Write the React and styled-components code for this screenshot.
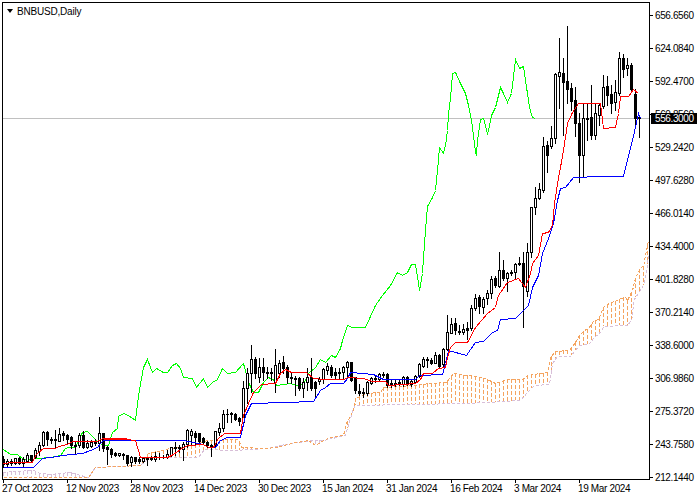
import React from 'react';
import styled, { createGlobalStyle } from 'styled-components';

const GlobalStyle = createGlobalStyle`
    html, body {
        margin: 0;
        padding: 0;
        background: #ffffff;
    }
`;

const Page = styled.div`
    width: 700px;
    height: 500px;
    box-sizing: border-box;
    padding: 2px 0 0 2px;
    display: grid;
    grid-template-columns: 648px 50px;
    grid-template-rows: 478px 20px;
    background: #ffffff;
    color: #000000;
    font-family: "Liberation Sans", Arial, sans-serif;
    font-size: 10px;
    overflow: hidden;
`;
const ChartPanel = styled.div`
    grid-column: 1;
    grid-row: 1;
    position: relative;
    border: 1px solid #000000;
    overflow: hidden;
`;
const ChartSvg = styled.svg`
    display: block;
`;
const Title = styled.div`
    position: absolute;
    left: 4px;
    top: 1px;
    height: 14px;
    display: flex;
    align-items: center;
    gap: 4px;
    letter-spacing: -0.2px;
`;
const Arrow = styled.span`
    width: 0;
    height: 0;
    border-left: 3.5px solid transparent;
    border-right: 3.5px solid transparent;
    border-top: 4px solid #000000;
`;
const PriceAxis = styled.div`
    grid-column: 2;
    grid-row: 1 / span 2;
    position: relative;
    box-sizing: border-box;
    padding: 6px 0 15px;
    display: flex;
    flex-direction: column;
    justify-content: space-between;
    letter-spacing: -0.38px;
`;
const PriceRow = styled.div`
    height: 14px;
    display: flex;
    align-items: center;
    gap: 2px;
    &::before {
        content: "";
        width: 3px;
        height: 1px;
        background: #000000;
    }
`;
const CurrentPrice = styled.div`
    position: absolute;
    left: 1px;
    top: 111px;
    width: 42px;
    height: 11px;
    padding-left: 4px;
    line-height: 11px;
    background: #000000;
    color: #ffffff;
`;
const TimeAxis = styled.div`
    grid-column: 1;
    grid-row: 2;
    display: flex;
    letter-spacing: -0.35px;
`;
const TimeLabel = styled.div`
    width: 64px;
    white-space: nowrap;
    line-height: 12px;
    &::before {
        content: "";
        display: block;
        width: 1px;
        height: 3px;
        margin-left: 1px;
        background: #000000;
    }
`;

// [high, body top, body bottom, low, filled], screen pixels, one bar each 4px from x=3
const BARS = [
    [456,459,464,467,1],[459,461,464,466,0],[459,461,463,465,0],[458,458,463,464,0],[457,458,463,464,1],
    [457,459,463,467,0],[453,455,461,462,0],[455,455,460,461,1],[448,450,457,458,0],[442,445,451,455,0],
    [431,432,445,446,0],[431,432,439,445,1],[437,439,440,443,1],[430,439,440,447,1],[428,434,441,441,0],
    [431,433,435,440,1],[434,435,439,443,1],[436,437,445,448,1],[442,445,446,453,1],[433,435,445,447,0],
    [431,435,447,448,1],[440,443,447,448,0],[440,442,446,447,0],[439,441,443,445,1],[417,433,443,450,0],
    [433,433,448,451,1],[446,447,449,464,1],[448,449,454,457,1],[452,453,455,456,1],[453,453,455,456,0],
    [453,454,455,459,1],[455,455,463,465,1],[456,457,462,466,0],[457,457,461,463,1],[457,459,461,463,1],
    [457,458,461,462,0],[457,457,459,465,1],[456,457,459,460,1],[452,456,459,461,0],[453,457,457,459,1],
    [455,457,457,458,1],[450,454,457,458,0],[447,447,455,456,0],[442,447,448,455,1],[445,447,448,452,1],
    [442,444,449,460,0],[429,430,444,447,0],[429,431,435,444,0],[431,433,437,444,1],[433,433,441,442,1],
    [437,438,442,444,1],[441,442,445,447,1],[444,445,447,456,1],[431,431,445,447,0],[423,428,432,435,0],
    [410,414,428,431,0],[409,414,414,422,1],[412,413,414,422,1],
    [413,414,419,420,1],[417,418,421,425,1],[381,388,422,423,0],[368,373,388,403,0],[345,359,373,392,0],
    [357,359,373,378,1],[358,367,377,382,0],[358,367,372,380,1],[367,372,373,378,1],[368,372,373,380,1],
    [349,365,382,392,0],[360,363,373,377,0],[356,362,368,373,1],[365,367,377,383,1],[373,377,378,383,1],
    [376,378,379,395,1],[377,378,388,390,1],[378,382,388,397,0],[368,377,382,390,0],[358,377,388,390,1],
    [381,382,388,397,1],[377,379,381,384,0],[368,369,379,383,0],[363,366,370,374,0],[365,367,375,377,1],
    [368,372,375,378,1],[368,372,373,379,1],[366,367,372,379,0],[361,362,367,378,0],[362,362,380,381,1],
    [377,377,390,393,1],[384,391,393,395,1],[388,392,393,397,1],[381,382,393,395,0],[377,378,383,384,0],
    [376,378,379,382,1],[373,374,379,381,0],[372,374,375,377,1],[373,374,385,387,1],[379,383,385,387,1],
    [380,383,384,386,1],[379,382,383,385,1],[376,377,384,386,0],[376,377,383,385,1],[379,381,384,386,0],
    [375,376,382,383,0],[363,364,376,377,0],[357,359,366,367,0],[357,359,360,367,1],[358,360,363,364,1],
    [352,355,363,363,0],[354,355,366,367,1],[348,349,364,367,0],[315,332,349,350,0],
    [318,324,333,333,0],[318,323,330,334,1],[325,331,332,334,1],[324,329,332,334,0],[322,328,330,339,1],
    [305,308,328,330,0],[294,298,308,310,0],[295,297,306,313,1],[297,299,307,313,0],[290,293,298,304,0],
    [276,279,293,298,0],[276,278,285,287,1],[252,270,286,287,0],[260,270,278,280,1],[272,273,278,291,0],
    [270,272,273,275,1],[263,264,272,278,0],[257,263,264,265,1],[252,263,286,327,1],[243,252,291,296,0],
    [207,207,252,257,0],[187,198,207,214,0],[183,189,198,199,0],[137,146,190,192,0],
    [141,145,155,172,1],[126,138,146,148,0],[73,74,138,143,0],[38,72,76,108,0],[58,73,82,135,1],
    [26,81,89,103,1],[83,88,101,110,1],[87,100,123,136,1],[113,123,155,182,1],[104,118,155,176,0],
    [103,118,119,140,1],[85,117,135,139,1],[103,113,135,139,0],[103,105,115,125,0],[75,87,106,108,0],
    [76,86,95,105,1],[85,94,103,113,1],[80,92,102,110,0],[52,58,93,95,0],[54,58,69,77,1],
    [58,65,68,75,0],[63,65,89,91,1],[89,94,118,127,1],[117,117,118,137,1],
];

const GREEN = '3,449 10,454 17,454 23,459 30,459 37,458 50,457 60,455 65,448 68,447 75,447 82,432 87,431 93,437 97,441 103,445 108,445 112,432 117,428 118,416 123,413 128,415 135,420 138,395 143,367 147,359 152,372 156,368 163,372 167,372 172,365 176,363 180,368 183,377 192,378 196,387 203,378 207,387 212,382 217,379 222,368 227,373 235,372 243,363 248,382 253,392 258,392 263,382 268,377 274,380 276,385 290,383 296,385 303,384 308,373 315,367 320,359 325,362 331,355 335,357 340,348 342,340 347,325 352,327 365,327 375,305 382,295 390,285 397,272 402,275 407,272 411,264 415,264 418,283 419,290 422,273 423,257 425,230 427,206 432,197 435,190 436,180 438,159 439,147 443,153 445,145 447,130 448,113 450,98 452,73 455,72 460,83 465,93 468,105 471,120 473,135 475,152 476,154 477,140 480,119 483,118 487,133 488,130 491,115 495,107 500,87 503,93 507,102 511,93 515,59 519,68 523,66 529,107 532,117 535,118';
const RED = '3,463 13,462 32,462 35,455 38,452 43,448 55,448 58,446 67,444 72,441 97,441 100,439 103,438 126,438 126,439 103,439 126,439 135,440 140,457 167,457 173,454 183,447 188,445 203,444 208,447 213,447 218,438 224,433 240,433 243,415 248,403 253,392 261,384 275,383 280,373 285,369 291,372 306,372 313,378 323,379 343,379 348,377 363,378 372,381 385,381 388,385 415,383 420,379 423,373 432,373 438,368 445,367 447,357 450,347 455,342 467,342 475,327 487,313 495,307 498,295 507,282 518,278 525,287 530,273 532,263 538,255 542,233 548,232 552,225 554,203 558,177 560,167 563,150 567,123 572,112 578,103 600,103 603,128 615,127 618,113 620,96 628,96 633,89 638,93';
const BLUE = '3,467 33,467 42,458 57,456 62,455 82,453 90,450 97,447 100,443 103,440 183,440 193,442 203,444 208,447 215,447 220,440 227,437 240,437 245,415 251,403 285,402 313,401 320,390 325,387 330,383 343,383 347,378 350,372 362,373 373,374 383,379 415,379 419,375 442,374 445,363 448,350 466,355 470,349 475,342 483,341 492,332 497,330 500,319 515,318 523,310 528,305 532,287 538,275 542,253 548,238 553,223 557,200 560,188 565,187 573,177 600,176 623,176 632,140 638,113 640,118';
const SPAN_A = '3,477 88,477 95,467 140,465 148,453 170,448 193,445 207,440 238,439 241,447 266,448 276,447 291,443 308,440 315,445 323,440 330,437 343,435 346,423 353,410 355,398 366,393 380,392 383,387 413,385 430,383 446,382 453,373 466,375 477,376 487,379 495,383 507,379 522,379 527,375 547,372 550,357 555,351 569,350 575,342 579,335 584,330 588,328 593,321 598,319 603,307 610,302 615,301 620,298 625,297 627,300 632,290 635,278 640,267 643,266 645,255 648,240';
const SPAN_B = '3,472 15,471 33,470 40,473 50,474 70,472 80,475 88,477 95,467 140,465 146,460 155,457 198,457 204,449 233,450 266,448 290,443 313,440 323,440 345,435 353,408 355,405 466,403 487,402 520,400 527,392 534,385 549,384 552,363 557,356 570,356 579,345 588,344 594,337 602,330 603,326 627,325 632,318 633,300 638,293 643,285 646,272 648,255';

const PRICES = ['656.6560','624.0840','592.4700','560.8560','529.2420','497.6280','466.0140','434.4000','401.8280','370.2140','338.6000','306.9860','275.3720','243.7580','212.1440'];
const DATES = ['27 Oct 2023','12 Nov 2023','28 Nov 2023','14 Dec 2023','30 Dec 2023','15 Jan 2024','31 Jan 2024','16 Feb 2024','3 Mar 2024','19 Mar 2024'];

const parse = (line) => line.split(' ').map((p) => p.split(',').map(Number));

const yAt = (points, x) => {
    for (let i = 1; i < points.length; i++) {
        if (x <= points[i][0]) {
            const [x0, y0] = points[i - 1];
            const [x1, y1] = points[i];
            return y0 + ((y1 - y0) * (x - x0)) / (x1 - x0);
        }
    }
    return points[points.length - 1][1];
};

const Hatch = () => {
    const a = parse(SPAN_A);
    const b = parse(SPAN_B);
    const cols = [];
    for (let x = 3; x < 648; x += 4) {
        const ya = yAt(a, x);
        const yb = yAt(b, x);
        cols.push(
            <line key={x} x1={x + 0.5} x2={x + 0.5} y1={Math.round(Math.min(ya, yb))} y2={Math.round(Math.max(ya, yb))}
                  stroke={ya <= yb ? '#f4a460' : '#d8bfd8'} strokeDasharray="4 2"/>
        );
    }
    return <g>{cols}</g>;
};

const Candle = ({ bar, index }) => {
    const [high, top, bottom, low, filled] = bar;
    const x = 3 + index * 4;
    return (
        <g>
            <line x1={x + 0.5} x2={x + 0.5} y1={high} y2={low + 1} stroke="#000000"/>
            <rect x={x - 0.5} y={top + 0.5} width={2} height={Math.max(bottom - top, 0.01)}
                  fill={filled ? '#000000' : '#ffffff'} stroke="#000000"/>
        </g>
    );
};

const Chart = () => (
    <ChartSvg width="646" height="476" viewBox="3 3 646 476" shapeRendering="crispEdges">
        <line x1="3" x2="649" y1="118.5" y2="118.5" stroke="#c0c0c0"/>
        <Hatch/>
        <g transform="translate(0.5 0.5)" fill="none">
            <polyline points={SPAN_B} stroke="#d8bfd8" strokeDasharray="3 2"/>
            <polyline points={SPAN_A} stroke="#f4a460" strokeDasharray="3 2"/>
            <polyline points={GREEN} stroke="#00ff00"/>
        </g>
        {BARS.map((bar, i) => <Candle key={i} bar={bar} index={i}/>)}
        <g transform="translate(0.5 0.5)" fill="none">
            <polyline points={BLUE} stroke="#0000ff"/>
            <polyline points={RED} stroke="#ff0000"/>
        </g>
    </ChartSvg>
);

export default function App() {
    return (
        <Page>
            <GlobalStyle/>
            <ChartPanel>
                <Chart/>
                <Title><Arrow/>BNBUSD,Daily</Title>
            </ChartPanel>
            <PriceAxis>
                {PRICES.map((p) => <PriceRow key={p}>{p}</PriceRow>)}
                <CurrentPrice>556.3000</CurrentPrice>
            </PriceAxis>
            <TimeAxis>
                {DATES.map((d) => <TimeLabel key={d}>{d}</TimeLabel>)}
            </TimeAxis>
        </Page>
    );
}
